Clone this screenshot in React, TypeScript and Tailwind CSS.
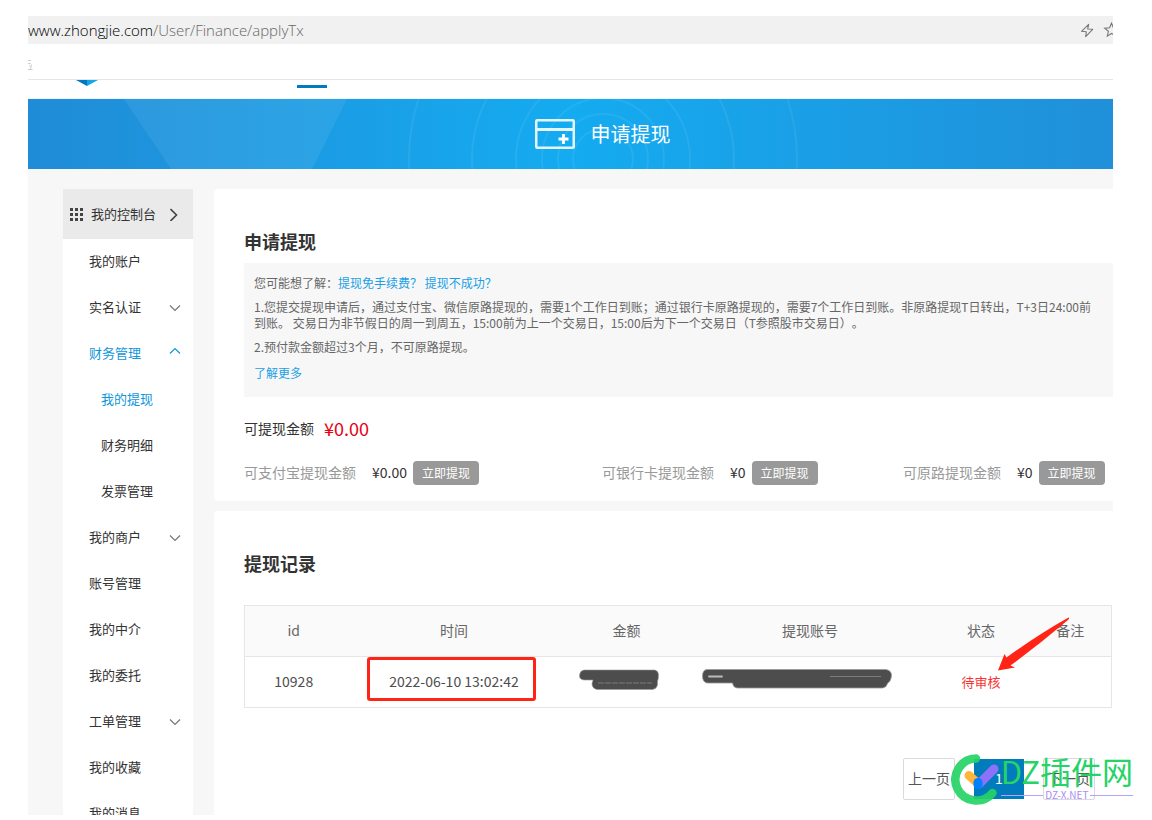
import { useState } from 'react';

type MenuItem = {
  label: string;
  children?: string[];
  expandable?: boolean;
};

const menu: MenuItem[] = [
  { label: '我的账户' },
  { label: '实名认证', expandable: true },
  {
    label: '财务管理',
    expandable: true,
    children: ['我的提现', '财务明细', '发票管理'],
  },
  { label: '我的商户', expandable: true },
  { label: '账号管理' },
  { label: '我的中介' },
  { label: '我的委托' },
  { label: '工单管理', expandable: true },
  { label: '我的收藏' },
  { label: '我的消息' },
];

const balances = [
  { label: '可支付宝提现金额', amount: '¥0.00' },
  { label: '可银行卡提现金额', amount: '¥0' },
  { label: '可原路提现金额', amount: '¥0' },
];

const records = [{ id: 10928, time: '2022-06-10 13:02:42', status: '待审核' }];

const Chevron = ({ up }: { up?: boolean }) => (
  <svg
    width="12"
    height="8"
    viewBox="0 0 12 8"
    fill="none"
    stroke="currentColor"
    className={up ? 'mb-1 text-[#1296db]' : 'mt-0.5 text-[#777]'}
  >
    <path d={up ? 'M1 6.5 6 1.5l5 5' : 'M1 1.5l5 5 5-5'} strokeWidth="1.2" />
  </svg>
);

const AddressBar = () => (
  <div className="flex h-7 shrink-0 items-center justify-between overflow-hidden bg-[#f1f1f1]">
    <div className="font-['Open_Sans','Noto_Sans',sans-serif] text-[15px] leading-5 font-light text-[#666]">
      <span className="text-black">www.zhongjie.com</span>
      /User/Finance/applyTx
    </div>
    <svg width="33" height="16" viewBox="0 0 33 16" fill="none" stroke="#777">
      <path
        d="M8.7 2.3 7.7 7l5 .3-7 7.4.6-5-4.8-.4z"
        strokeWidth="1.1"
        strokeLinejoin="round"
      />
      <path
        d="M31.5 1.2l1.9 4.5 4.9.4-3.7 3.2 1.1 4.8-4.2-2.6-4.2 2.6 1.1-4.8-3.7-3.2 4.9-.4z"
        strokeWidth="1.1"
      />
    </svg>
  </div>
);

const SiteHeader = () => (
  <>
    <div className="flex h-9 shrink-0 items-center border-b border-[#e5e5e5] pt-1.5">
      <svg width="5" height="10" viewBox="0 0 5 10" stroke="#ccc" fill="none">
        <path d="M0 .5h3M0 3.5h2.5M1 6h1.5M3.5 4.5L2.5 9M0 9.5h4.5" />
      </svg>
    </div>
    <div className="flex h-[19px] shrink-0 items-start border-b border-[#f3f3f3] pl-12">
      <svg width="22" height="6" viewBox="0 0 22 6">
        <path d="M0 0h11v6z" fill="#0277bb" />
        <path d="M22 0H11v6z" fill="#12a5e8" />
      </svg>
      <span className="mt-[5px] ml-[199px] h-[3px] w-[30px] bg-[#007bbb]" />
    </div>
  </>
);

const Banner = () => (
  <div className="relative flex h-[70px] shrink-0 items-center justify-center gap-4 overflow-hidden bg-linear-to-r from-[#208cd7] via-[#14abf0] to-[#1f90d9] pl-16">
    <svg
      className="absolute inset-0 h-full w-full"
      viewBox="0 0 1085 70"
      preserveAspectRatio="xMidYMid slice"
      fill="none"
    >
      <path d="M96 0h223l-35 70H143z" fill="#fff" fillOpacity="0.07" />
      <g stroke="#fff" strokeOpacity="0.07" strokeWidth="2">
        <circle cx="575" cy="60" r="30" />
        <circle cx="575" cy="60" r="45" />
        <circle cx="575" cy="60" r="61" />
        <circle cx="575" cy="60" r="87" />
        <circle cx="575" cy="60" r="131" />
        <circle cx="575" cy="60" r="194" />
      </g>
    </svg>
    <svg
      className="relative"
      width="40"
      height="30"
      viewBox="0 0 40 30"
      fill="none"
      stroke="#e4f5fe"
    >
      <rect x="1.25" y="1.25" width="37.5" height="27.5" rx="1" strokeWidth="2.5" />
      <path d="M2 10.5h36" strokeWidth="3" />
      <path d="M28.5 15v10M23.5 20h10" strokeWidth="2.8" stroke="#fff" />
    </svg>
    <span className="relative text-xl text-white">申请提现</span>
  </div>
);

const Sidebar = () => {
  const [open, setOpen] = useState('财务管理');

  return (
    <nav className="w-[130px] shrink-0 bg-white text-[13px] text-[#333]">
      <a href="#console" className="flex h-[50px] items-center bg-[#eaeaea] pl-[7px]">
        <svg width="13" height="13" viewBox="0 0 13 13" fill="#444">
          {[0, 5, 10].map((y) =>
            [0, 5, 10].map((x) => (
              <rect key={`${x}-${y}`} x={x} y={y} width="3" height="3" />
            ))
          )}
        </svg>
        <span className="ml-2">我的控制台</span>
        <svg
          className="ml-3.5"
          width="10"
          height="14"
          viewBox="0 0 10 14"
          fill="none"
          stroke="#444"
          strokeWidth="1.6"
        >
          <path d="M.5 2l6 6-6 6" />
        </svg>
      </a>
      {menu.map((item) => {
        const isOpen = item.label === open;
        return (
          <div key={item.label}>
            {item.expandable ? (
              <button
                type="button"
                onClick={() => setOpen(isOpen ? '' : item.label)}
                className={`flex h-[46px] w-full items-center justify-between pr-3 pb-0.5 pl-[26px] ${
                  isOpen ? 'text-[#1296db]' : ''
                }`}
              >
                {item.label}
                <Chevron up={isOpen} />
              </button>
            ) : (
              <a href="#menu" className="flex h-[46px] items-center pb-0.5 pl-[26px]">
                {item.label}
              </a>
            )}
            {isOpen &&
              item.children?.map((child, i) => (
                <a
                  key={child}
                  href="#menu"
                  className={`flex h-[46px] items-center pb-0.5 pl-[38px] ${
                    i === 0 ? 'text-[#1296db]' : ''
                  }`}
                >
                  {child}
                </a>
              ))}
          </div>
        );
      })}
    </nav>
  );
};

const Withdraw = () => (
  <section className="rounded-l bg-white pt-[38px] pb-4 pl-[30px] text-sm text-[#333]">
    <h2 className="mb-2 text-lg leading-7 font-bold">申请提现</h2>
    <div className="bg-[#f7f7f7] pt-3 pr-[17px] pb-4 pl-2.5 text-xs leading-4 text-[#666] [text-spacing-trim:space-all]">
      <p>
        您可能想了解：
        <a href="#fee" className="text-[#1b9fe6]">
          提现免手续费？
        </a>{' '}
        <a href="#failed" className="text-[#1b9fe6]">
          提现不成功？
        </a>
      </p>
      <p className="mt-2">
        1.您提交提现申请后，通过支付宝、微信原路提现的，需要1个工作日到账；通过银行卡原路提现的，需要7个工作日到账。非原路提现T日转出，T+3日24:00前到账。
        交易日为非节假日的周一到周五，15:00前为上一个交易日，15:00后为下一个交易日（T参照股市交易日）。
      </p>
      <p className="mt-2">2.预付款金额超过3个月，不可原路提现。</p>
      <a href="#more" className="mt-2.5 block text-[#1b9fe6]">
        了解更多
      </a>
    </div>
    <div className="mt-5 flex h-6 items-center gap-2.5 pb-0.5">
      可提现金额
      <span className="text-lg text-[#e60012]">¥0.00</span>
    </div>
    <div className="mt-5 grid grid-cols-[358fr_301fr_210fr]">
      {balances.map((b) => (
        <div key={b.label} className="flex h-6 items-center whitespace-nowrap">
          <span className="pb-0.5 text-[#999]">{b.label}</span>
          <span className="ml-4 pb-0.5">{b.amount}</span>
          <button
            type="button"
            className="ml-1.5 h-6 rounded bg-[#999] px-[9px] text-xs text-white"
          >
            立即提现
          </button>
        </div>
      ))}
    </div>
  </section>
);

const Records = () => (
  <section className="grow rounded-tl bg-white pt-[38px] pr-0.5 pl-[30px] text-sm text-[#333]">
    <h2 className="text-lg leading-7 font-bold">提现记录</h2>
    <table className="mt-7 w-full table-fixed border-collapse border border-[#e6e6e6] text-center">
      <colgroup>
        <col className="w-[98px]" />
        <col className="w-[223px]" />
        <col className="w-[122px]" />
        <col className="w-[245px]" />
        <col className="w-[97px]" />
        <col className="w-[82px]" />
      </colgroup>
      <thead>
        <tr className="h-[51px] border-b border-[#e6e6e6] bg-[#fafafa] text-[#666]">
          <th className="pb-0.5 font-normal">id</th>
          <th className="pb-0.5 font-normal">时间</th>
          <th className="pb-0.5 font-normal">金额</th>
          <th className="pb-0.5 font-normal">提现账号</th>
          <th className="pb-0.5 font-normal">状态</th>
          <th className="pb-0.5 font-normal">备注</th>
        </tr>
      </thead>
      <tbody>
        {records.map((r) => (
          <tr key={r.id} className="h-[51px] text-[#4d4d4d]">
            <td className="pb-0.5">{r.id}</td>
            <td className="relative pb-0.5">
              {r.time}
              <span className="absolute top-0 right-[30px] left-6 h-11 rounded-[3px] border-3 border-[#ff2415]" />
            </td>
            {/* amount and account are scribbled out */}
            <td className="relative">
              <svg
                className="absolute top-3 left-[13px]"
                width="80"
                height="22"
                viewBox="0 0 80 22"
              >
                <path
                  d="M5 1h71q3.5 1 3.5 5t-1 6v4q-1 4-5 4.5H18q-5-1-5-6l1-3.5H5Q0 10.5.5 6 1 1.5 5 1z"
                  fill="#4d4d4d"
                  stroke="#999"
                  strokeWidth="0.6"
                />
                <path d="M19 14h54" stroke="#888" strokeWidth="0.8" strokeDasharray="6 1" />
              </svg>
            </td>
            <td className="relative">
              <svg
                className="absolute top-3 left-3.5"
                width="190"
                height="20"
                viewBox="0 0 190 20"
              >
                <path
                  d="M5 .5h179q5.5 1 5.5 6t-4 8q-1 4-5 4.5H35q-4-.5-4.5-5H5Q.5 13 .5 7T5 .5z"
                  fill="#4d4d4d"
                  stroke="#999"
                  strokeWidth="0.8"
                />
                <path d="M7 7.5h13" stroke="#bbb" strokeWidth="1.8" strokeLinecap="round" />
                <path d="M128 7.5h51" stroke="#888" strokeWidth="0.8" />
              </svg>
            </td>
            <td className="relative text-[13px] text-[#fa3534]">
              {r.status}
              <svg
                className="absolute bottom-[35px] left-[63px]"
                width="74"
                height="56"
                viewBox="0 0 74 56"
                fill="#ff2415"
              >
                <path d="M2 54.5 8.5 38l2 3.5Q43 18 72.5 1.5 74 2 72 4 45 27 14.5 49.5l4.5 2z" />
              </svg>
            </td>
            <td />
          </tr>
        ))}
      </tbody>
    </table>
    <div className="mt-[50px] flex justify-end gap-[18px] pr-4 text-sm text-[#555]">
      <button type="button" className="h-[42px] w-[52px] rounded-xs border border-[#d9d9e0] pb-0.5">
        上一页
      </button>
      <button
        type="button"
        className="h-[42px] w-[52px] border border-white bg-[#007bbb] pb-0.5 text-white"
      >
        1
      </button>
      <button type="button" className="h-[42px] w-[52px] rounded-xs border border-[#d9d9e0] pb-0.5">
        下一页
      </button>
    </div>
  </section>
);

const Watermark = () => (
  <div className="pointer-events-none absolute right-[19px] bottom-[15px] flex items-center">
    <svg width="50" height="52" viewBox="0 0 50 52" fill="none" strokeLinecap="round">
      <path
        d="M25 5.5A21 21 0 1 0 41.5 40"
        stroke="#25d366"
        strokeOpacity="0.92"
        strokeWidth="8.5"
      />
      <path d="M18 22.5l9 8" stroke="#ffb638" strokeWidth="9" />
      <path d="M28 31l15-15" stroke="#8b72f8" strokeWidth="9" />
      <path d="M27 31.5v-2" stroke="#0080ff" strokeWidth="9" />
    </svg>
    <div>
      <div className="text-[31px] leading-7 text-[#25d366]">DZ插件网</div>
      <div className="mt-1 flex items-center gap-0.5 text-[10px] leading-3 text-[#a98cf5]">
        <span className="h-px grow bg-[#b9a0f8]" />
        DZ-X.NET
        <span className="h-px grow bg-[#b9a0f8]" />
      </div>
    </div>
  </div>
);

const App = () => {
  return (
    <div className="relative flex h-screen flex-col overflow-hidden bg-white pt-4 pr-[39px] pb-[5px] pl-7 font-['Noto_Sans_CJK_SC',sans-serif]">
      <AddressBar />
      <SiteHeader />
      <Banner />
      <div className="flex min-h-0 grow gap-[21px] overflow-hidden bg-[#f7f7f7] pt-5 pl-[35px]">
        <Sidebar />
        <main className="flex min-w-0 grow flex-col gap-2.5">
          <Withdraw />
          <Records />
        </main>
      </div>
      <Watermark />
    </div>
  );
};

export default App;
